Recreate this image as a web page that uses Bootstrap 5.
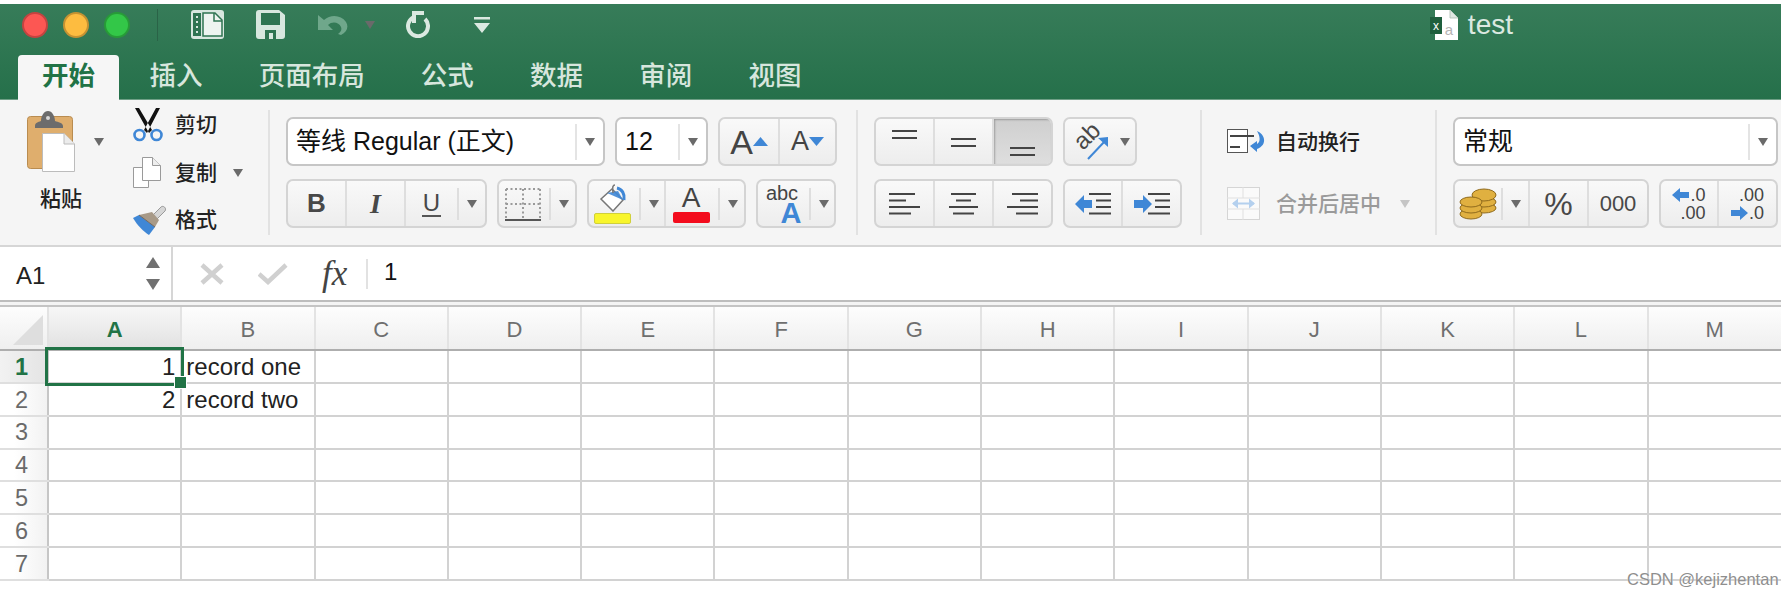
<!DOCTYPE html>
<html lang="zh-CN">
<head>
<meta charset="UTF-8">
<title>test</title>
<link rel="stylesheet" href="https://cdn.jsdelivr.net/npm/bootstrap@5.3.0/dist/css/bootstrap.min.css">
<script src="https://cdn.jsdelivr.net/npm/bootstrap@5.3.0/dist/js/bootstrap.bundle.min.js"></script>
<style>
body { margin: 0; background: #fff; font-family: "Liberation Sans", "Noto Sans CJK SC", sans-serif; color: #222; }
svg { display: block; flex: none; }
.xl-app { width: 1781px; min-height: 598px; padding-top: 4px; position: relative; }

/* title bar + tabs */
.xl-head { height: 96px; background: linear-gradient(#377c59, #25704a); border-bottom: 1px solid #6f9f86; }
.title-row { height: 51px; padding: 0 268px 10px 22px; }
.light { width: 26px; height: 26px; border-radius: 50%; margin-right: 15px; border: 2px solid rgba(0,0,0,.22); }
.light-r { background: #fc5753; }
.light-y { background: #fdbc40; }
.light-g { background: #33c748; margin-right: 0; }
.title-sep { width: 1px; height: 32px; background: #2a6347; margin: 0 33px 0 27px; }
.ti-save { margin-left: 32px; }
.ti-undo { margin-left: 33px; }
.ti-caret { margin-left: 16px; border-top-color: #6fa78b; }
.ti-redo { margin-left: 30px; }
.ti-more { margin-left: 44px; }
.title-name { font-size: 28px; color: #dbe9e1; line-height: 1; margin-left: 10px; }
.ribbon-tabs { height: 45px; padding-left: 18px; flex-wrap: nowrap; }
.ribbon-tabs .nav-link { padding: 0 28.1px; height: 45px; line-height: 43px; font-size: 26.5px; color: #d7e6dd; white-space: nowrap; font-weight: 500; }
.ribbon-tabs .nav-link.active { background: #f6f6f6; color: #217346; border-radius: 4px 4px 0 0; padding: 0 24px; font-weight: 700; margin-right: 2.4px; }

/* ribbon */
.ribbon { height: 147px; background: #f5f5f5; border-bottom: 2px solid #d6d6d6; }
.rb-sep { width: 2px; height: 125px; background: #e2e2e2; flex: none; }
.rb-sep-font { margin-left: 19px; }
.rb-sep-align { margin-left: 18px; }
.rb-col { gap: 13px; padding-left: 16px; }
.rb-col-num { padding-right: 3px; }
.rb-row { height: 49px; gap: 10px; }
.paste-col { width: 125px; margin-bottom: 22px; }
.paste-top { gap: 19px; margin-left: 27px; }
.paste-label { font-size: 21px; font-weight: 500; margin: 14px 0 0 40px; line-height: 1.2; }
.clip-side { width: 135px; margin-left: 8px; }
.clip-item { height: 47.5px; font-size: 21px; font-weight: 500; }
.clip-ico { width: 42px; }
.tri { width: 0; height: 0; flex: none; border-left: 6px solid transparent; border-right: 6px solid transparent; border-top: 9px solid #6a6a6a; }
.tri-sm { border-left-width: 5px; border-right-width: 5px; border-top-width: 8px; }
.tri-off { border-top-color: #c5c5c5; margin-left: 19px; }
.field { height: 49px; background: #fff; border: 2px solid #c6c6c6; border-radius: 7px; font-size: 25px; color: #111; }
.field-text { flex: 1; padding-left: 8px; white-space: nowrap; }
.field-end { height: 36px; border-left: 2px solid #e4e4e4; }
.fw-font { width: 319px; }
.fw-size { width: 93px; }
.fw-num { width: 325px; }
.tb-group { height: 49px; border: 2px solid #d4d4d4; border-radius: 7px; background: linear-gradient(#f9f9f9, #ededed); overflow: hidden; flex: none; }
.tb-group > .btn.tb-btn { margin-left: 0 !important; padding: 0; border: 0; border-right: 2px solid #dedede; border-radius: 0; height: 45px; color: #444; display: flex; align-items: center; justify-content: center; flex: none; }
.tb-group > .btn.tb-btn:last-child { border-right: 0; }
.tb-group > .btn.tb-on { background: linear-gradient(#cfcfcf, #dedede); box-shadow: inset 1px 1px 2px rgba(0,0,0,.25); }
.inner-sep { width: 2px; height: 32px; background: #dedede; flex: none; }
.g-aa { width: 119px; } .b-aa1 { width: 60px; } .b-aa2 { width: 55px; }
.g-biu { width: 201px; } .b-b { width: 59px; } .b-i { width: 59px; } .b-u { width: 79px; }
.g-brd { width: 80px; } .b-full { width: 76px; }
.g-col { width: 159px; } .b-fill { width: 77px; } .b-font { width: 78px; }
.g-ali { width: 179px; } .b-a3 { width: 59px; } .b-a3l { width: 57px; }
.g-ori { width: 74px; } .b-ori { width: 70px; }
.g-ind { width: 119px; } .b-ind { width: 58px; } .b-ind2 { width: 57px; }
.g-cur { width: 196px; } .b-coin { width: 75px; } .b-pct { width: 59px; } .b-k { width: 58px; }
.aa-big { font-size: 34px; line-height: 1; color: #444; }
.aa-small { font-size: 27px; line-height: 1; color: #444; }
.tb-b { font-size: 26px; font-weight: 700; color: #484848; }
.tb-i { font-family: "Liberation Serif", serif; font-size: 28px; font-weight: 700; font-style: italic; color: #484848; }
.tb-u { font-size: 24px; color: #484848; line-height: 25px; border-bottom: 2px solid #555; padding: 0 1px; }
.swatch-a { font-size: 28px; line-height: 26px; color: #444; }
.swatch { width: 37px; height: 11px; border-radius: 2px; margin-top: 1px; }
.swatch-y { background: #f8f52c; border: 1px solid #cfcf3c; }
.swatch-r { background: #f30c1d; }
.abc-1 { font-size: 20px; line-height: 18px; color: #444; }
.abc-2 { font-size: 29px; line-height: 22px; font-weight: 700; color: #3f87d6; margin-left: 18px; }
.tb-pct { font-size: 32px; color: #484848; }
.tb-k { font-size: 22px; color: #484848; }
.dec-num { font-size: 18px; line-height: 18px; color: #444; }
.dec-line { gap: 1px; }
.wrap-col { padding-left: 25px; }
.wrap-line { height: 49px; font-size: 21px; font-weight: 500; }
.wrap-off { color: #9a9a9a; }
.wrap-txt { margin-left: 8px; }

/* formula bar */
.fx-bar { height: 53px; background: #fff; }
.name-box { width: 173px; border-right: 2px solid #d6d6d6; padding: 5px 11px 0 16px; font-size: 24px; }
.spin { gap: 11px; margin-top: -5px; }
.spin-up { width: 0; height: 0; border-left: 7px solid transparent; border-right: 7px solid transparent; border-bottom: 11px solid #707070; }
.spin-dn { width: 0; height: 0; border-left: 7px solid transparent; border-right: 7px solid transparent; border-top: 11px solid #707070; }
.fx-x { margin-left: 27px; }
.fx-ok { margin-left: 34px; }
.fx-mark { font-family: "Liberation Serif", serif; font-style: italic; font-size: 35px; color: #444; margin-left: 34px; line-height: 1; width: 44px; }
.fx-sep { width: 2px; height: 30px; background: #e2e2e2; margin-right: 16px; }
.fx-val { font-size: 24px; color: #111; margin-top: -4px; }

/* grid */
.sheet-wrap { border-top: 2px solid #bdbdbd; padding-top: 3px; position: relative; background: #f4f4f4; }
.sheet { border-collapse: collapse; table-layout: fixed; width: 1781px; background: #fff; }
.sheet th, .sheet td { padding: 0; overflow: hidden; white-space: nowrap; }
.sheet thead th { height: 44px; padding-top: 2px; font-weight: 400; font-size: 22px; text-align: center; color: #6f6f6f; background: linear-gradient(#fdfdfd, #efefef); border-left: 2px solid #e3e3e3; border-bottom: 2px solid #aeaeae; border-top: 2px solid #c4c4c4; }
.sheet thead th:first-child { border-left: 0; width: 48px; }
.sheet thead th.col-on { color: #217346; font-weight: 700; background: linear-gradient(#f7f7f7, #e1e1e1); }
.sheet tbody th { width: 48px; height: 32.85px; padding: 2px 4px 0 0; font-weight: 400; font-size: 23.5px; line-height: 1; color: #6a6a6a; text-align: center; background: linear-gradient(90deg, #fff 30%, #f2f2f2); border-bottom: 2px solid #dfdfdf; border-right: 2px solid #c6c6c6; }
.sheet tbody th.row-on { color: #217346; font-weight: 700; background: linear-gradient(90deg, #f2f2f2, #e4e4e4); }
.sheet tbody td { height: 32.85px; padding-top: 2px; font-size: 24px; line-height: 1; color: #222; border-right: 2px solid #d2d2d2; border-bottom: 2px solid #d2d2d2; }
.sheet tbody td:last-child { border-right: 0; }
.num-cell { text-align: right; padding-right: 5px !important; }
.text-cell { padding-left: 4px !important; }
.corner { position: absolute; left: 13px; top: 13px; width: 0; height: 0; border-left: 30px solid transparent; border-bottom: 30px solid #dedede; }
.sel-box { position: absolute; left: 45px; top: 45px; width: 139px; height: 39px; border: 3px solid #217346; pointer-events: none; }
.sel-handle { position: absolute; right: -5px; bottom: -5px; width: 11px; height: 11px; background: #217346; outline: 1px solid #fff; }
.watermark { position: absolute; left: 1627px; top: 569px; font-size: 16.5px; line-height: 20px; color: #8e8e8e; text-shadow: 0 0 1px #fff; white-space: nowrap; }
</style>
</head>
<body>
<div class="xl-app">
  <div class="xl-head">
    <div class="title-row d-flex align-items-center">
      <span class="light light-r"></span><span class="light light-y"></span><span class="light light-g"></span>
      <span class="title-sep"></span>
      <svg width="33" height="29" viewBox="0 0 33 29"><rect width="33" height="29" rx="3" fill="#d8e7df"/><rect x="2" y="3" width="8" height="23" fill="#2f7452"/><path d="M5 6h2v2H5zM5 11h2v2H5zM5 16h2v2H5zM5 21h2v2H5z" fill="#d8e7df"/><path d="M12 3h12l7 7v16H12z" fill="#eef4f0" stroke="#2f7452" stroke-width="1.5"/><path d="M23 3v8h8" fill="none" stroke="#2f7452" stroke-width="1.5"/></svg>
      <svg class="ti-save" width="29" height="29" viewBox="0 0 29 29"><path d="M3 0h20l6 5v21a3 3 0 0 1-3 3H3a3 3 0 0 1-3-3V3a3 3 0 0 1 3-3z" fill="#d8e7df"/><rect x="5" y="3" width="19" height="12" fill="#2f7452"/><rect x="9" y="20" width="11" height="9" fill="#2f7452"/><rect x="13" y="23" width="4" height="6" fill="#d8e7df"/></svg>
      <svg class="ti-undo" width="31" height="20" viewBox="0 0 31 20"><path d="M0 0v15h15l-5-5c4-4 11-3 13 2 1 3 0 5-3 7l3 1c6-3 8-8 5-13C23 0 13-1 6 5z" fill="#6fa78b"/></svg>
      <span class="tri tri-sm ti-caret"></span>
      <svg class="ti-redo" width="25" height="27" viewBox="0 0 25 27"><path d="M9 6A10 10 0 1 0 20 8" fill="none" stroke="#dbe9e1" stroke-width="4"/><path d="M7 0h12v4h-8v8H7z" fill="#dbe9e1"/></svg>
      <svg class="ti-more" width="16" height="16" viewBox="0 0 16 16"><path d="M0 0h16v2.5H0zM0 6h16l-8 10z" fill="#dbe9e1"/></svg>
      <div class="ms-auto d-flex align-items-center">
        <svg width="28" height="30" viewBox="0 0 28 30"><path d="M5 0h15l8 8v22H5z" fill="#fff"/><path d="M20 0v8h8" fill="#dfe7e2" stroke="#a9bcb1" stroke-width=".8"/><rect x="0" y="7" width="12" height="17" fill="#1f5f3e"/><text x="6" y="20" font-size="12" fill="#fff" text-anchor="middle" font-family="Liberation Sans">x</text><text x="19" y="25" font-size="15" fill="#b5b5b5" text-anchor="middle" font-family="Liberation Sans">a</text></svg>
        <span class="title-name">test</span>
      </div>
    </div>
    <ul class="nav ribbon-tabs">
      <li class="nav-item"><a class="nav-link active" href="#">开始</a></li>
      <li class="nav-item"><a class="nav-link" href="#">插入</a></li>
      <li class="nav-item"><a class="nav-link" href="#">页面布局</a></li>
      <li class="nav-item"><a class="nav-link" href="#">公式</a></li>
      <li class="nav-item"><a class="nav-link" href="#">数据</a></li>
      <li class="nav-item"><a class="nav-link" href="#">审阅</a></li>
      <li class="nav-item"><a class="nav-link" href="#">视图</a></li>
    </ul>
  </div>

  <div class="ribbon d-flex align-items-center">
    <!-- clipboard -->
    <div class="d-flex align-items-center">
      <div class="paste-col d-flex flex-column">
        <div class="paste-top d-flex align-items-center">
          <svg width="48" height="61" viewBox="0 0 48 61"><rect x="0.5" y="5.5" width="45" height="52" rx="3" fill="#dfae6d" stroke="#b98c50"/><path d="M8 15c0-3 3-4 6-5 0-5 3-10 7-10s7 5 7 10c3 1 8 2 8 5v2H8z" fill="#6c6c6c"/><circle cx="21" cy="7" r="2" fill="#d9d9d9"/><path d="M15.5 22.5H37L47.5 33V60.5H15.5z" fill="#fff" stroke="#bcbcbc"/><path d="M37 22.5V33h10.5" fill="#ececec" stroke="#bcbcbc"/></svg>
          <span class="tri tri-sm"></span>
        </div>
        <div class="paste-label">粘贴</div>
      </div>
      <div class="clip-side">
        <div class="clip-item d-flex align-items-center">
          <div class="clip-ico"><svg width="30" height="34" viewBox="0 0 30 34"><path d="M2 0l4 0 13 22-3 3zM27 0l-4 0-12 22 3 3z" fill="#111"/><circle cx="6.5" cy="27" r="5" fill="none" stroke="#3f87d6" stroke-width="2.6"/><circle cx="23.5" cy="27" r="5" fill="none" stroke="#3f87d6" stroke-width="2.6"/></svg></div>
          <span>剪切</span>
        </div>
        <div class="clip-item d-flex align-items-center">
          <div class="clip-ico"><svg width="28" height="31" viewBox="0 0 28 31"><path d="M.5 10.5h10l5 5v15H.5z" fill="#fff" stroke="#9a9a9a"/><path d="M9.5.5h10l8 8v15h-18z" fill="#fff" stroke="#9a9a9a"/><path d="M19.5.5v8h8" fill="#eee" stroke="#9a9a9a"/></svg></div>
          <span>复制</span><span class="tri tri-sm ms-3"></span>
        </div>
        <div class="clip-item d-flex align-items-center">
          <div class="clip-ico"><svg width="34" height="30" viewBox="0 0 34 30"><path d="M20 10l8-8c2-2 6 1 4 4l-8 8z" fill="#d6d6d6" stroke="#9a9a9a"/><path d="M6 10l13-3 7 8-4 7z" fill="#a89a88"/><path d="M0 13l6-3 16 12-6 8C11 27 4 20 0 13z" fill="#3f87d6"/><path d="M6 10l16 12" stroke="#75675a" fill="none"/></svg></div>
          <span>格式</span>
        </div>
      </div>
    </div>
    <div class="rb-sep"></div>

    <!-- font -->
    <div class="rb-col d-flex flex-column">
      <div class="rb-row d-flex">
        <div class="field fw-font d-flex align-items-center">
          <span class="field-text">等线 Regular (正文)</span>
          <span class="field-end"></span><span class="tri tri-sm mx-2"></span>
        </div>
        <div class="field fw-size d-flex align-items-center">
          <span class="field-text">12</span>
          <span class="field-end"></span><span class="tri tri-sm mx-2"></span>
        </div>
        <div class="btn-group tb-group g-aa">
          <button class="btn tb-btn b-aa1"><span class="aa-big">A</span><svg width="15" height="9" viewBox="0 0 15 9"><path d="M7.5 0L15 9H0z" fill="#3f87d6"/></svg></button>
          <button class="btn tb-btn b-aa2"><span class="aa-small">A</span><svg width="15" height="9" viewBox="0 0 15 9"><path d="M0 0h15L7.5 9z" fill="#3f87d6"/></svg></button>
        </div>
      </div>
      <div class="rb-row d-flex">
        <div class="btn-group tb-group g-biu">
          <button class="btn tb-btn b-b"><span class="tb-b">B</span></button>
          <button class="btn tb-btn b-i"><span class="tb-i">I</span></button>
          <button class="btn tb-btn b-u"><span class="tb-u ms-3">U</span><span class="inner-sep ms-3"></span><span class="tri tri-sm mx-2"></span></button>
        </div>
        <div class="btn-group tb-group g-brd">
          <button class="btn tb-btn b-full"><svg class="ms-2" width="36" height="34" viewBox="0 0 36 34"><path d="M1 2H35M1 17H35M1 2V32M35 2V32M18 2V32" stroke="#9a9a9a" stroke-width="2" stroke-dasharray="2 2.5" fill="none"/><path d="M0 33H36" stroke="#555" stroke-width="2"/></svg><span class="inner-sep ms-2"></span><span class="tri tri-sm mx-2"></span></button>
        </div>
        <div class="btn-group tb-group g-col">
          <button class="btn tb-btn b-fill"><span class="d-flex flex-column align-items-center ms-2"><svg width="28" height="28" viewBox="0 0 28 28"><path d="M13 5l11 11-10 11L2 15z" fill="#fff" stroke="#777" stroke-width="1.5"/><path d="M8 9l11-2 5 9z" fill="#3f87d6" opacity=".9"/><path d="M16 1c-2 0-3 2-2 8" fill="none" stroke="#777" stroke-width="1.5"/><path d="M18 4c5 1 8 6 7 12" fill="none" stroke="#3f87d6" stroke-width="3"/></svg><span class="swatch swatch-y"></span></span><span class="inner-sep ms-2"></span><span class="tri tri-sm mx-2"></span></button>
          <button class="btn tb-btn b-font"><span class="d-flex flex-column align-items-center ms-2"><span class="swatch-a">A</span><span class="swatch swatch-r"></span></span><span class="inner-sep ms-2"></span><span class="tri tri-sm mx-2"></span></button>
        </div>
        <div class="btn-group tb-group g-brd">
          <button class="btn tb-btn b-full"><span class="d-flex flex-column ms-2"><span class="abc-1">abc</span><span class="abc-2">A</span></span><span class="inner-sep ms-2"></span><span class="tri tri-sm mx-2"></span></button>
        </div>
      </div>
    </div>
    <div class="rb-sep rb-sep-font"></div>

    <!-- alignment -->
    <div class="rb-col d-flex flex-column">
      <div class="rb-row d-flex">
        <div class="btn-group tb-group g-ali">
          <button class="btn tb-btn b-a3"><svg width="26" height="34" viewBox="0 0 26 34"><path d="M0 6H25M0 13H25" stroke="#444" stroke-width="2"/></svg></button>
          <button class="btn tb-btn b-a3"><svg width="26" height="34" viewBox="0 0 26 34"><path d="M0 14H25M0 21H25" stroke="#444" stroke-width="2"/></svg></button>
          <button class="btn tb-btn b-a3l tb-on"><svg width="26" height="34" viewBox="0 0 26 34"><path d="M0 23H25M0 30H25" stroke="#444" stroke-width="2"/></svg></button>
        </div>
        <div class="btn-group tb-group g-ori">
          <button class="btn tb-btn b-ori"><svg class="ms-1" width="38" height="38" viewBox="0 0 38 38"><text font-size="24" fill="#484848" font-family="Liberation Sans" transform="translate(9 28) rotate(-45)">ab</text><path d="M14 36L31 18" stroke="#3f87d6" stroke-width="2"/><path d="M24 15l10-1v10z" fill="#3f87d6"/></svg><span class="tri tri-sm ms-2"></span></button>
        </div>
      </div>
      <div class="rb-row d-flex">
        <div class="btn-group tb-group g-ali">
          <button class="btn tb-btn b-a3"><svg width="31" height="24" viewBox="0 0 31 24"><path d="M0 2H26M0 8.5H17M0 15H31M0 21.5H22" stroke="#444" stroke-width="2"/></svg></button>
          <button class="btn tb-btn b-a3"><svg width="29" height="24" viewBox="0 0 29 24"><path d="M2 2H27M7 8.5H22M0 15H29M4 21.5H25" stroke="#444" stroke-width="2"/></svg></button>
          <button class="btn tb-btn b-a3l"><svg width="31" height="24" viewBox="0 0 31 24"><path d="M5 2H31M13 8.5H31M0 15H31M9 21.5H31" stroke="#444" stroke-width="2"/></svg></button>
        </div>
        <div class="btn-group tb-group g-ind">
          <button class="btn tb-btn b-ind"><svg width="36" height="24" viewBox="0 0 36 24"><path d="M14 2H36M21 8.5H36M21 15H36M14 21.5H36" stroke="#444" stroke-width="2"/><path d="M0 12L9 3v5h8v8H9v5z" fill="#3f87d6"/></svg></button>
          <button class="btn tb-btn b-ind2"><svg width="36" height="24" viewBox="0 0 36 24"><path d="M14 2H36M21 8.5H36M21 15H36M14 21.5H36" stroke="#444" stroke-width="2"/><path d="M18 12L9 3v5H0v8h9v5z" fill="#3f87d6"/></svg></button>
        </div>
      </div>
    </div>
    <div class="rb-sep rb-sep-align"></div>

    <!-- wrap / merge -->
    <div class="rb-col wrap-col d-flex flex-column">
      <div class="wrap-line d-flex align-items-center">
        <svg width="41" height="26" viewBox="0 0 41 26"><rect x=".5" y=".5" width="20" height="23" fill="#fff" stroke="#555"/><path d="M3 7H27M3 18H13" stroke="#444" stroke-width="2"/><path d="M30 2c8 3 11 14 0 18v3l-7-6 7-5v3c4-2 3-8 0-13z" fill="#3f87d6"/></svg>
        <span class="wrap-txt">自动换行</span>
      </div>
      <div class="wrap-line wrap-off d-flex align-items-center">
        <svg width="33" height="33" viewBox="0 0 33 33"><rect x=".5" y=".5" width="32" height="32" fill="#fafafa" stroke="#d5d5d5"/><path d="M0 11H33M0 22H33M16 0V11M16 22V33" stroke="#e0e0e0"/><path d="M6 16.5H27" stroke="#b4d0ee" stroke-width="2"/><path d="M5 16.5l6-5v10zM28 16.5l-6-5v10z" fill="#b4d0ee"/></svg>
        <span class="ms-3">合并后居中</span><span class="tri tri-sm tri-off"></span>
      </div>
    </div>
    <div class="rb-sep ms-auto"></div>

    <!-- number -->
    <div class="rb-col rb-col-num d-flex flex-column">
      <div class="field fw-num d-flex align-items-center">
        <span class="field-text">常规</span>
        <span class="field-end"></span><span class="tri tri-sm mx-2"></span>
      </div>
      <div class="rb-row d-flex">
        <div class="btn-group tb-group g-cur">
          <button class="btn tb-btn b-coin"><svg class="ms-1" width="38" height="32" viewBox="0 0 38 32"><g fill="#e0b040" stroke="#8f6a1c"><ellipse cx="25" cy="20" rx="12" ry="5"/><ellipse cx="25" cy="14" rx="12" ry="5"/><ellipse cx="25" cy="7" rx="12" ry="6"/><ellipse cx="12" cy="26" rx="11" ry="5"/><ellipse cx="12" cy="20" rx="11" ry="5"/><ellipse cx="12" cy="14" rx="11" ry="5"/></g></svg><span class="inner-sep ms-1"></span><span class="tri tri-sm mx-2"></span></button>
          <button class="btn tb-btn b-pct"><span class="tb-pct">%</span></button>
          <button class="btn tb-btn b-k"><span class="tb-k">000</span></button>
        </div>
        <div class="btn-group tb-group g-ind">
          <button class="btn tb-btn b-ind"><span class="d-flex flex-column align-items-end">
            <span class="dec-line d-flex align-items-center"><svg width="17" height="14" viewBox="0 0 17 14"><path d="M0 7l8-7v4h9v6H8v4z" fill="#3f87d6"/></svg><span class="dec-num">.0</span></span>
            <span class="dec-num">.00</span>
          </span></button>
          <button class="btn tb-btn b-ind2"><span class="d-flex flex-column align-items-end">
            <span class="dec-num">.00</span>
            <span class="dec-line d-flex align-items-center"><svg width="17" height="14" viewBox="0 0 17 14"><path d="M17 7L9 0v4H0v6h9v4z" fill="#3f87d6"/></svg><span class="dec-num">.0</span></span>
          </span></button>
        </div>
      </div>
    </div>
  </div>

  <!-- formula bar -->
  <div class="fx-bar d-flex align-items-center">
    <div class="name-box h-100 d-flex align-items-center justify-content-between">
      <span>A1</span>
      <span class="spin d-flex flex-column"><span class="spin-up"></span><span class="spin-dn"></span></span>
    </div>
    <svg class="fx-x" width="24" height="22" viewBox="0 0 24 22"><path d="M2 2L22 20M22 2L2 20" stroke="#d0d0d0" stroke-width="4.5"/></svg>
    <svg class="fx-ok" width="30" height="22" viewBox="0 0 30 22"><path d="M1 11l9 8L28 2" fill="none" stroke="#d0d0d0" stroke-width="4.5"/></svg>
    <span class="fx-mark">fx</span>
    <span class="fx-sep"></span>
    <span class="fx-val">1</span>
  </div>

  <!-- sheet -->
  <div class="sheet-wrap">
    <span class="corner"></span>
    <table class="sheet">
      <thead>
        <tr><th></th><th class="col-on">A</th><th>B</th><th>C</th><th>D</th><th>E</th><th>F</th><th>G</th><th>H</th><th>I</th><th>J</th><th>K</th><th>L</th><th>M</th></tr>
      </thead>
      <tbody>
        <tr><th class="row-on">1</th><td class="num-cell">1</td><td class="text-cell">record one</td><td></td><td></td><td></td><td></td><td></td><td></td><td></td><td></td><td></td><td></td><td></td></tr>
        <tr><th>2</th><td class="num-cell">2</td><td class="text-cell">record two</td><td></td><td></td><td></td><td></td><td></td><td></td><td></td><td></td><td></td><td></td><td></td></tr>
        <tr><th>3</th><td></td><td></td><td></td><td></td><td></td><td></td><td></td><td></td><td></td><td></td><td></td><td></td><td></td></tr>
        <tr><th>4</th><td></td><td></td><td></td><td></td><td></td><td></td><td></td><td></td><td></td><td></td><td></td><td></td><td></td></tr>
        <tr><th>5</th><td></td><td></td><td></td><td></td><td></td><td></td><td></td><td></td><td></td><td></td><td></td><td></td><td></td></tr>
        <tr><th>6</th><td></td><td></td><td></td><td></td><td></td><td></td><td></td><td></td><td></td><td></td><td></td><td></td><td></td></tr>
        <tr><th>7</th><td></td><td></td><td></td><td></td><td></td><td></td><td></td><td></td><td></td><td></td><td></td><td></td><td></td></tr>
      </tbody>
    </table>
    <div class="sel-box"><span class="sel-handle"></span></div>
  </div>
  <span class="watermark">CSDN @kejizhentan</span>
</div>
</body>
</html>
